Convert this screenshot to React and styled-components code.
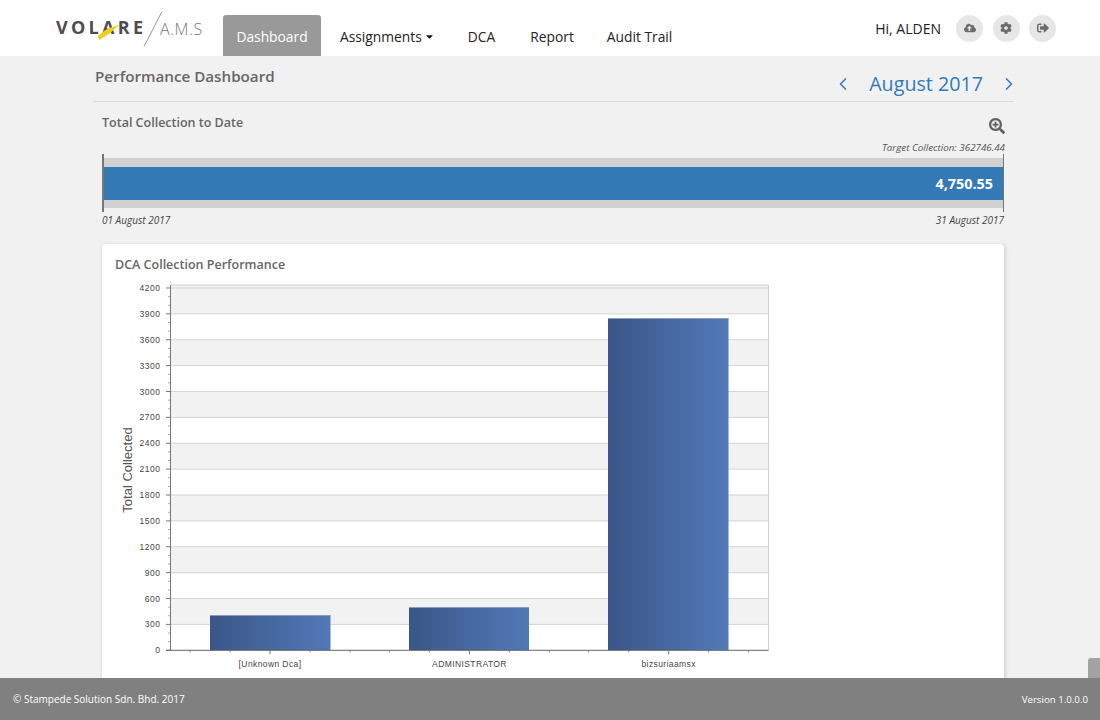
import React from "react";
import styled, { createGlobalStyle } from "styled-components";
import { FaCloudUploadAlt, FaCog, FaSignOutAlt, FaSearchPlus, FaCaretDown } from "react-icons/fa";
import { FiChevronLeft, FiChevronRight } from "react-icons/fi";

const Global = createGlobalStyle`
  html, body { margin: 0; padding: 0; height: 100%; overflow: hidden; }
  body { background: #f1f1f1; font-family: "Open Sans", "Noto Sans", sans-serif; }
  * { box-sizing: border-box; }
`;

const Page = styled.div`
  position: relative;
  height: 720px;
  display: flex;
  flex-direction: column;
  overflow: hidden;
`;

const Header = styled.header`
  flex: 0 0 56px;
  height: 56px;
  background: #fff;
  display: flex;
  align-items: flex-end;
  padding-left: 50px;
  padding-right: 44px;
`;

const LogoWrap = styled.div`
  width: 173px;
  height: 56px;
  flex: none;
`;

const Nav = styled.nav`
  display: flex;
  align-items: flex-end;
  height: 41px;
`;

const NavItem = styled.div`
  height: 41px;
  display: flex;
  align-items: center;
  gap: 2px;
  padding: 2px 0 0;
  margin-right: ${(p) => p.$gap}px;
  font-size: 13.8px;
  color: #222;
  white-space: nowrap;
`;

const ActiveTab = styled(NavItem)`
  width: 98px;
  justify-content: center;
  background: #999;
  color: #fff;
  border-radius: 3px 3px 0 0;
`;

const UserArea = styled.div`
  margin-left: auto;
  height: 56px;
  display: flex;
  align-items: center;
  font-size: 14px;
  color: #222;
`;

const Greeting = styled.span`
  margin-right: 15px;
`;

const RoundButton = styled.div`
  width: 27px;
  height: 27px;
  margin-left: ${(p) => (p.$first ? 0 : 9.5)}px;
  border-radius: 50%;
  background: #e6e6e6;
  color: #6b6b6b;
  font-size: 12px;
  display: flex;
  align-items: center;
  justify-content: center;
`;

const Main = styled.main`
  flex: 1;
  min-height: 0;
  overflow: hidden;
  padding-left: 94px;
`;

const Container = styled.div`
  width: 919px;
`;

const TitleRow = styled.div`
  height: 46px;
  border-bottom: 1px solid #d9d9d9;
  display: flex;
  justify-content: space-between;
`;

const PageTitle = styled.h1`
  margin: 10px 0 0 1px;
  font-size: 15.2px;
  line-height: 20px;
  font-weight: 600;
  color: #666;
`;

const MonthPicker = styled.div`
  display: flex;
  align-items: center;
  height: 36px;
  margin-top: 10px;
  margin-right: -6px;
  color: #337ab7;
  font-size: 19.7px;
`;

const MonthLabel = styled.span`
  margin: 0 16px;
  line-height: 36px;
`;

const MonthArrow = styled.span`
  display: flex;
  font-size: 20px;
  color: #3f78c4;
  width: 20px;
  justify-content: center;
`;

const Section = styled.section`
  padding: 0 9px 0 8px;
`;

const SectionHead = styled.div`
  display: flex;
  justify-content: space-between;
  height: 37px;
`;

const SectionTitle = styled.h2`
  margin: 12px 0 0;
  font-size: 12.5px;
  line-height: 18px;
  font-weight: 600;
  color: #666;
`;

const ZoomIcon = styled.span`
  display: flex;
  margin-top: 15.5px;
  margin-right: -1px;
  font-size: 16px;
  color: #606060;
`;

const TargetLine = styled.div`
  font-size: 9.8px;
  line-height: 12px;
  height: 12px;
  font-style: italic;
  color: #555;
  text-align: right;
  margin-top: 3px;
  margin-right: -1px;
`;

const Track = styled.div`
  height: 58px;
  border-left: 2px solid #777;
  border-right: 1.5px solid #777;
  padding: 4px 0;
`;

const TrackBg = styled.div`
  height: 50px;
  background: #d1d1d1;
  padding: 9px 0 8px;
`;

const Fill = styled.div`
  height: 33px;
  background: #337ab7;
  color: #fff;
  font-size: 14.4px;
  font-weight: 700;
  line-height: 34px;
  text-align: right;
  padding-right: 10px;
`;

const DateRow = styled.div`
  display: flex;
  justify-content: space-between;
  font-size: 10px;
  line-height: 14px;
  font-style: italic;
  color: #444;
  margin-top: 1px;
`;

const Card = styled.div`
  margin-top: 17px;
  height: 460px;
  background: #fff;
  border-radius: 4px;
  box-shadow: 1px 1px 4px rgba(0, 0, 0, 0.18);
  padding: 12px 0 0;
`;

const CardTitle = styled.h3`
  margin: 0 0 0 13px;
  font-size: 12.5px;
  line-height: 18px;
  font-weight: 600;
  color: #666;
`;

const ChartBox = styled.div`
  margin: 2px 0 0 8px;
  width: 680px;
  height: 410px;
`;

const Footer = styled.footer`
  flex: 0 0 42px;
  background: #808080;
  color: #fff;
  font-size: 10px;
  display: flex;
  align-items: center;
  justify-content: space-between;
  padding: 0 12px 0 13px;
  position: relative;
  z-index: 2;
`;

const VersionText = styled.span`
  font-size: 9.7px;
`;

const ScrollThumb = styled.div`
  position: absolute;
  right: 0;
  top: 658px;
  width: 12px;
  height: 20px;
  background: #a3a3a3;
  border-radius: 3px 0 0 0;
  z-index: 1;
`;

const Logo = () => (
  <svg width="173" height="56" viewBox="50 0 173 56">
    <text x="56" y="34" fontFamily="'Open Sans', sans-serif" fontSize="18" fontWeight="700" letterSpacing="3.3" fill="#4d4d4d">
      VOLARE
    </text>
    <path d="M97.5 37 C102 31 110 27 119 25 C114 29 111 33 107 35 L99.5 40 Z" fill="#f0d01e" />
    <path d="M144 46.5 L162 11.5" stroke="#7d7d7d" strokeWidth="0.8" fill="none" />
    <text x="160" y="35" fontFamily="'Open Sans', sans-serif" fontSize="16" fontWeight="300" letterSpacing="0.6" fill="#777">
      A.M.S
    </text>
  </svg>
);

const ticks = Array.from({ length: 15 }, (_, i) => i * 300);
const y0 = 650.3;
const step = 25.88;
const yOf = (v) => y0 - (v / 300) * step;
const plotL = 170.5;
const plotR = 768.5;
const bars = [
  { label: "[Unknown Dca]", x: 210, w: 120.5, top: 615.5, cx: 270 },
  { label: "ADMINISTRATOR", x: 409, w: 120, top: 607.5, cx: 469.5 },
  { label: "bizsuriaamsx", x: 608, w: 120.5, top: 318.5, cx: 668.7 },
];

const Chart = () => (
  <svg width="680" height="410" viewBox="110 276 680 410">
    <defs>
      <linearGradient id="barFill" x1="0" x2="1" y1="0" y2="0">
        <stop offset="0" stopColor="#3a5687" />
        <stop offset="1" stopColor="#5279b8" />
      </linearGradient>
    </defs>
    {ticks.slice(0, -1).map((v, i) =>
      i % 2 === 1 ? (
        <rect key={v} x={plotL} y={yOf(v + 300)} width={plotR - plotL} height={step} fill="#f2f2f2" />
      ) : null
    )}
    <rect x={plotL} y={285} width={plotR - plotL} height={yOf(4200) - 285} fill="#f2f2f2" />
    <path d={`M${plotL} 285H${plotR}V${y0}`} stroke="#cfcfcf" fill="none" />
    {ticks.map((v) => (
      <g key={v}>
        {v > 0 && <line x1={plotL} x2={plotR} y1={yOf(v)} y2={yOf(v)} stroke="#d4d4d4" />}
        <line x1={166} x2={plotL} y1={yOf(v)} y2={yOf(v)} stroke="#777" />
        <text x={160.5} y={yOf(v) + 3} textAnchor="end" fontFamily="'Liberation Sans', sans-serif" fontSize="8.5" letterSpacing="0.5" fill="#444">
          {v}
        </text>
        {v < 4200 &&
          [1, 2].map((k) => (
            <line key={k} x1={168} x2={plotL} y1={yOf(v + k * 100)} y2={yOf(v + k * 100)} stroke="#aaa" />
          ))}
      </g>
    ))}
    {bars.map((b) => (
      <g key={b.label}>
        <rect x={b.x} y={b.top} width={b.w} height={y0 - b.top} fill="url(#barFill)" />
        <line x1={b.x} x2={b.x + b.w} y1={b.top} y2={b.top} stroke="#8b9dbd" />
        {[-80, -40, 40, 80].map((d) => (
          <line key={d} x1={b.cx + d} x2={b.cx + d} y1={y0} y2={y0 + 2} stroke="#888" />
        ))}
        <line x1={b.cx} x2={b.cx} y1={y0} y2={y0 + 4} stroke="#777" />
        <text x={b.cx} y={666.5} textAnchor="middle" fontFamily="'Liberation Sans', sans-serif" fontSize="8.5" letterSpacing="0.4" fill="#444">
          {b.label}
        </text>
      </g>
    ))}
    <line x1={plotL} x2={plotL} y1={285} y2={y0} stroke="#777" />
    <line x1={166} x2={plotR} y1={y0} y2={y0} stroke="#666" />
    <text transform="translate(132 470) rotate(-90)" textAnchor="middle" fontFamily="'Liberation Sans', sans-serif" fontSize="13" fill="#555">
      Total Collected
    </text>
  </svg>
);

export default function App() {
  return (
    <Page>
      <Global />
      <Header>
        <LogoWrap>
          <Logo />
        </LogoWrap>
        <Nav>
          <ActiveTab $gap={19}>Dashboard</ActiveTab>
          <NavItem $gap={33}>
            Assignments <FaCaretDown size={11} color="#111" />
          </NavItem>
          <NavItem $gap={35}>DCA</NavItem>
          <NavItem $gap={33}>Report</NavItem>
          <NavItem $gap={0}>Audit Trail</NavItem>
        </Nav>
        <UserArea>
          <Greeting>Hi, ALDEN</Greeting>
          <RoundButton $first>
            <FaCloudUploadAlt />
          </RoundButton>
          <RoundButton>
            <FaCog />
          </RoundButton>
          <RoundButton>
            <FaSignOutAlt />
          </RoundButton>
        </UserArea>
      </Header>
      <Main>
        <Container>
          <TitleRow>
            <PageTitle>Performance Dashboard</PageTitle>
            <MonthPicker>
              <MonthArrow>
                <FiChevronLeft />
              </MonthArrow>
              <MonthLabel>August 2017</MonthLabel>
              <MonthArrow>
                <FiChevronRight />
              </MonthArrow>
            </MonthPicker>
          </TitleRow>
          <Section>
            <SectionHead>
              <SectionTitle>Total Collection to Date</SectionTitle>
              <ZoomIcon>
                <FaSearchPlus />
              </ZoomIcon>
            </SectionHead>
            <TargetLine>Target Collection: 362746.44</TargetLine>
            <Track>
              <TrackBg>
                <Fill>4,750.55</Fill>
              </TrackBg>
            </Track>
            <DateRow>
              <span>01 August 2017</span>
              <span>31 August 2017</span>
            </DateRow>
            <Card>
              <CardTitle>DCA Collection Performance</CardTitle>
              <ChartBox>
                <Chart />
              </ChartBox>
            </Card>
          </Section>
        </Container>
      </Main>
      <ScrollThumb />
      <Footer>
        <span>© Stampede Solution Sdn. Bhd. 2017</span>
        <VersionText>Version 1.0.0.0</VersionText>
      </Footer>
    </Page>
  );
}
